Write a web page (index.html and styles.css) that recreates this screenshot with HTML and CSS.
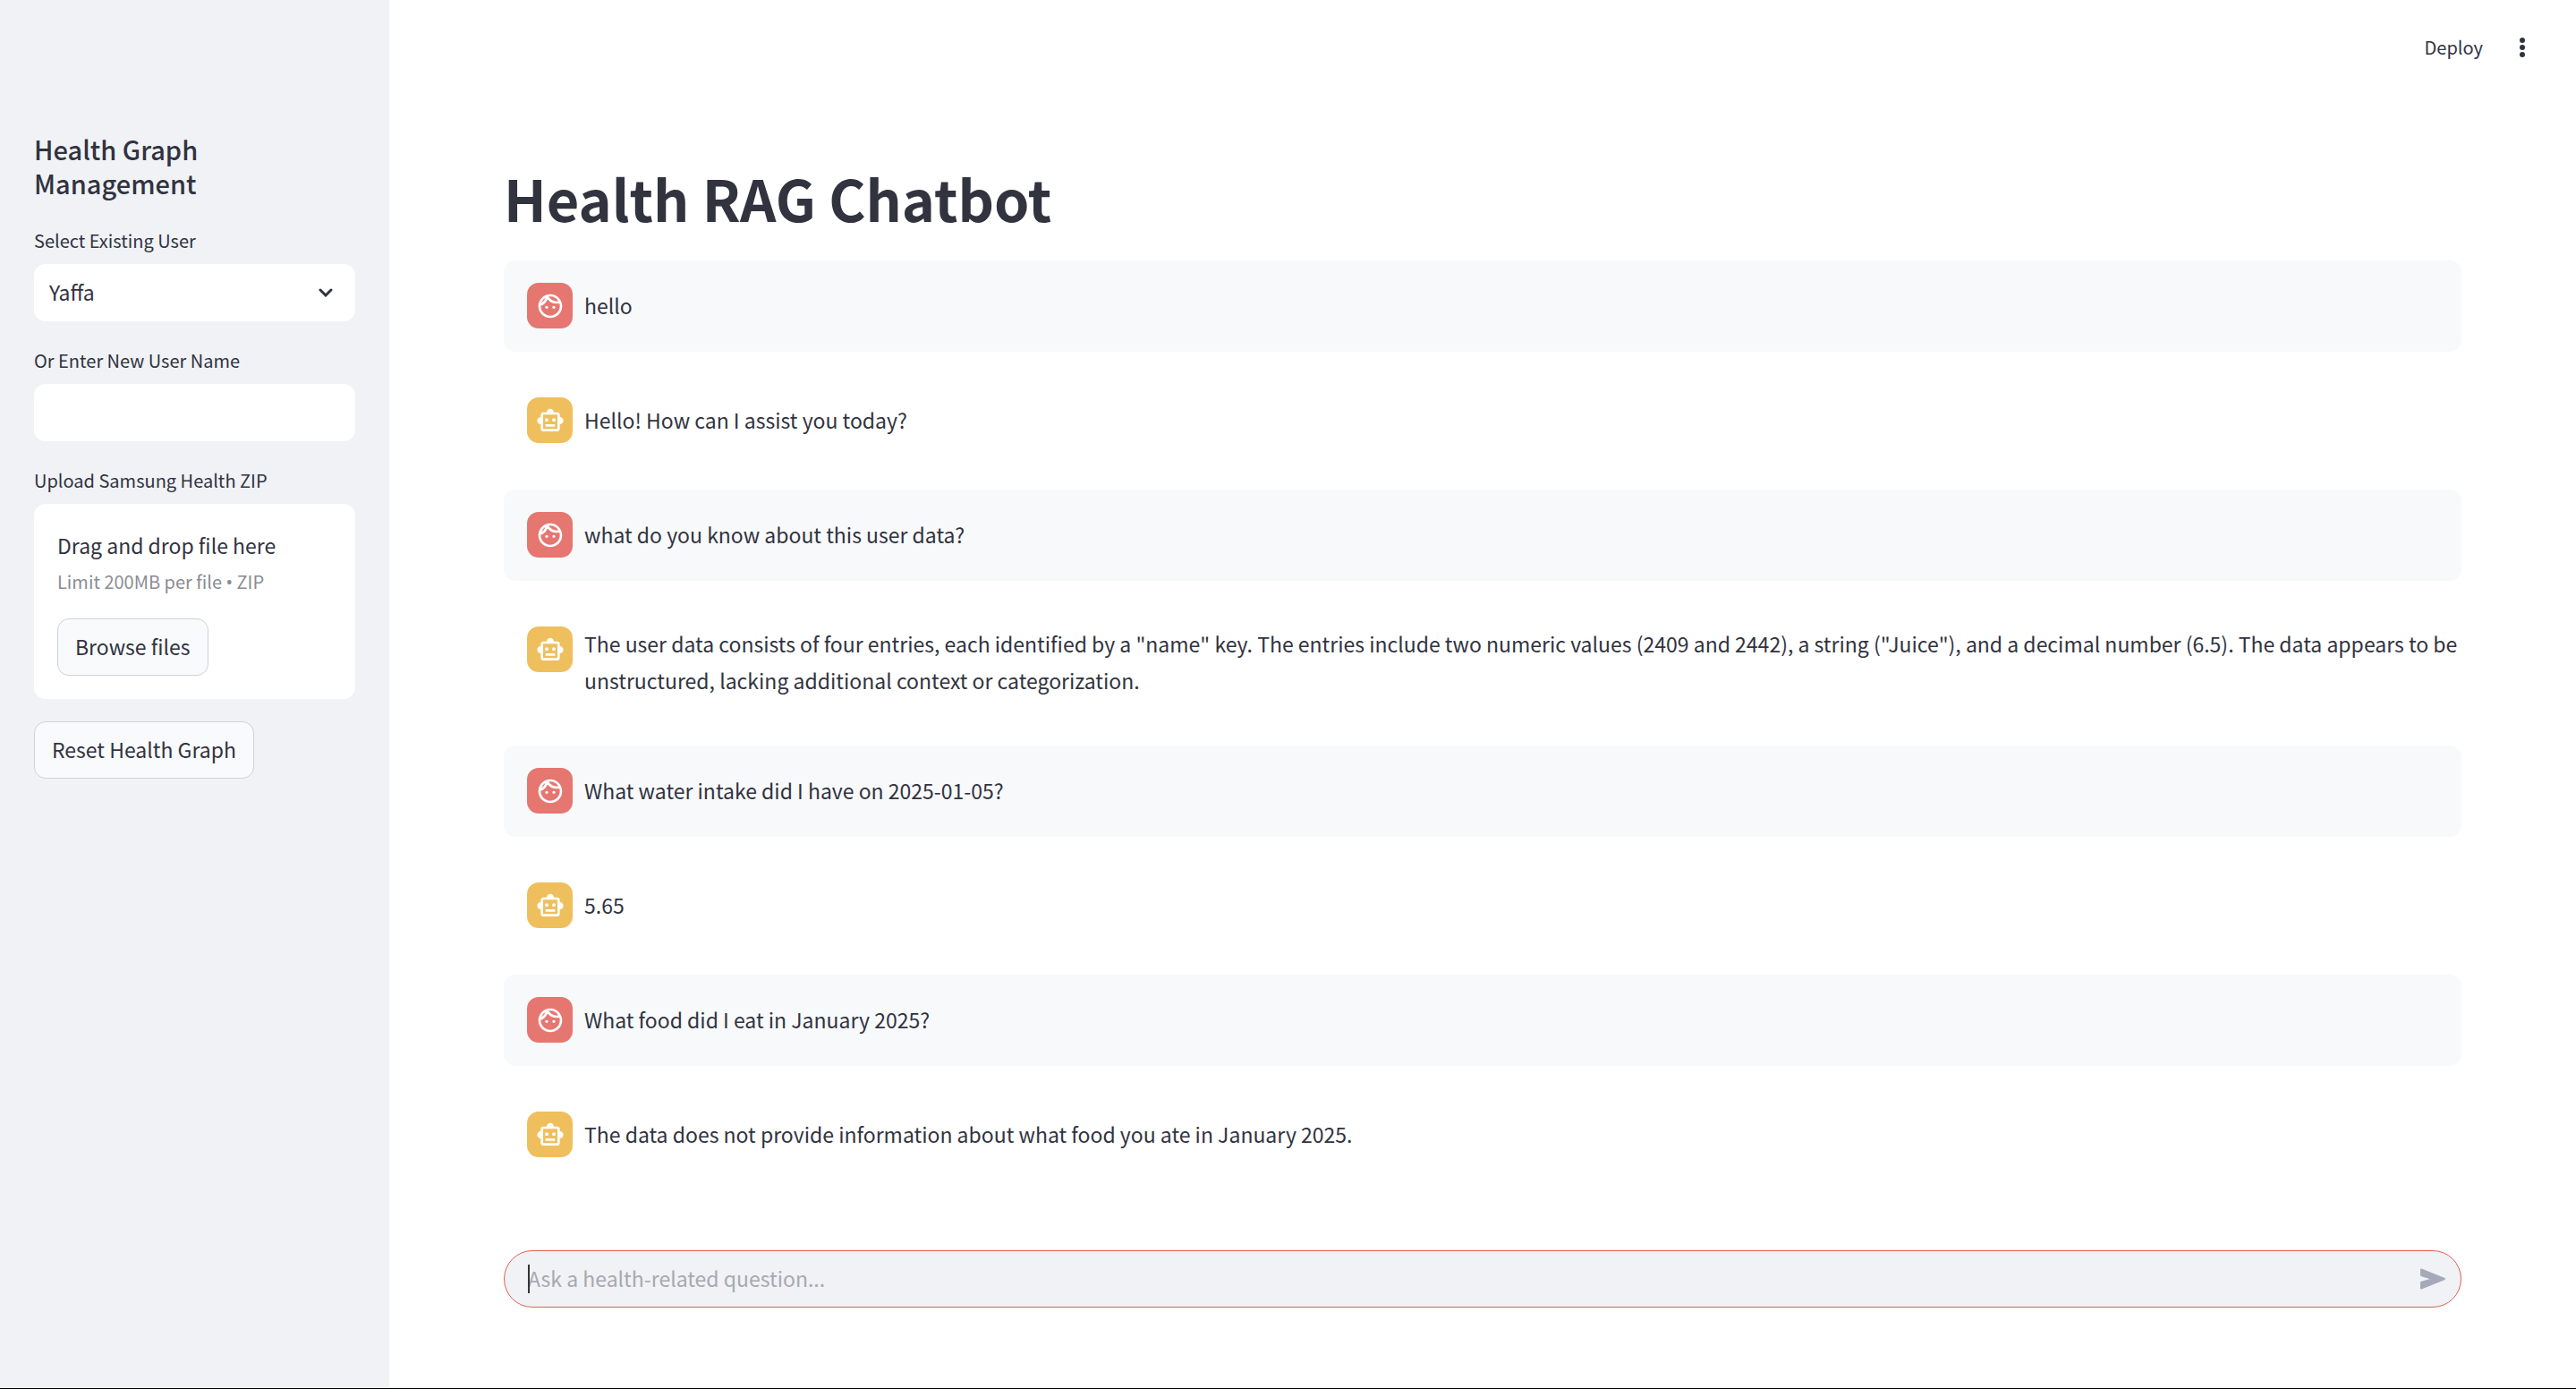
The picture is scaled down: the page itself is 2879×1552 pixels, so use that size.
FILE: index.html
```html
<!DOCTYPE html>
<html lang="en">
<head>
<meta charset="utf-8">
<title>Health RAG Chatbot</title>
<link rel="stylesheet" href="styles.css">
</head>
<body>
<svg class="sprite" aria-hidden="true">
  <symbol id="face" viewBox="0 0 24 24"><path d="M10.25 13c0 .69-.56 1.25-1.25 1.25S7.75 13.69 7.75 13s.56-1.25 1.25-1.25 1.25.56 1.25 1.25zM15 11.75c-.69 0-1.25.56-1.25 1.25s.56 1.25 1.25 1.25 1.25-.56 1.25-1.25-.56-1.25-1.25-1.25zm7 .25c0 5.52-4.48 10-10 10S2 17.52 2 12 6.48 2 12 2s10 4.48 10 10zM10.66 4.12C12.06 6.44 14.6 8 17.5 8c.46 0 .91-.05 1.34-.12C17.44 5.56 14.9 4 12 4c-.46 0-.91.05-1.34.12zM4.42 9.47a8.046 8.046 0 0 0 3.66-4.44 8.046 8.046 0 0 0-3.66 4.44zM20 12c0-.78-.12-1.53-.33-2.24-.7.15-1.42.24-2.17.24a10 10 0 0 1-7.76-3.69A10.016 10.016 0 0 1 4 11.86c.01.04 0 .09 0 .14 0 4.41 3.59 8 8 8s8-3.59 8-8z"/></symbol>
  <symbol id="robot" viewBox="0 0 24 24"><path d="M20 9V7c0-1.1-.9-2-2-2h-3c0-1.66-1.34-3-3-3S9 3.34 9 5H6c-1.1 0-2 .9-2 2v2c-1.66 0-3 1.34-3 3s1.34 3 3 3v4c0 1.1.9 2 2 2h12c1.1 0 2-.9 2-2v-4c1.66 0 3-1.34 3-3s-1.34-3-3-3zm-2 10H6V7h12v12zm-9-6c-.83 0-1.5-.67-1.5-1.5S8.17 10 9 10s1.5.67 1.5 1.5S9.83 13 9 13zm7.5-1.5c0 .83-.67 1.5-1.5 1.5s-1.5-.67-1.5-1.5.67-1.5 1.5-1.5 1.5.67 1.5 1.5zM8 15h8v2H8v-2z"/></symbol>
</svg>
<div class="app">
  <aside class="sidebar">
    <h2 class="sidebar-title">Health Graph Management</h2>
    <div class="field">
      <label class="label" for="user">Select Existing User</label>
      <div class="select-wrap">
        <select class="control" id="user"><option>Yaffa</option></select>
        <svg class="chevron" viewBox="0 0 16 10" aria-hidden="true"><path d="M2 2l6 6 6-6"/></svg>
      </div>
    </div>
    <div class="field">
      <label class="label" for="new-user">Or Enter New User Name</label>
      <input class="control" id="new-user" type="text">
    </div>
    <div class="field upload-field">
      <span class="label" id="upload-label">Upload Samsung Health ZIP</span>
      <section class="dropzone" aria-labelledby="upload-label">
        <p class="drop-title">Drag and drop file here</p>
        <p class="drop-limit">Limit 200MB per file <span class="bullet">•</span> ZIP</p>
        <button class="button" type="button">Browse files</button>
      </section>
    </div>
    <button class="button" type="button">Reset Health Graph</button>
  </aside>
  <div class="page">
    <header class="toolbar">
      <button class="deploy" type="button">Deploy</button>
      <button class="menu" type="button" aria-label="Menu"><svg class="dots" viewBox="0 0 6 22"><circle cx="3" cy="3" r="3"/><circle cx="3" cy="11" r="3"/><circle cx="3" cy="19" r="3"/></svg></button>
    </header>
    <main class="main">
      <h1 class="title">Health RAG Chatbot</h1>
      <div class="messages">
        <article class="message user"><span class="avatar"><svg class="icon"><use href="#face"/></svg></span><p class="text">hello</p></article>
        <article class="message bot"><span class="avatar"><svg class="icon"><use href="#robot"/></svg></span><p class="text">Hello! How can I assist you today?</p></article>
        <article class="message user"><span class="avatar"><svg class="icon"><use href="#face"/></svg></span><p class="text">what do you know about this user data?</p></article>
        <article class="message bot"><span class="avatar"><svg class="icon"><use href="#robot"/></svg></span><p class="text">The user data consists of four entries, each identified by a "name" key. The entries include two numeric values (2409 and 2442), a string ("Juice"), and a decimal number (6.5). The data appears to be unstructured, lacking additional context or categorization.</p></article>
        <article class="message user"><span class="avatar"><svg class="icon"><use href="#face"/></svg></span><p class="text">What water intake did I have on 2025-01-05?</p></article>
        <article class="message bot"><span class="avatar"><svg class="icon"><use href="#robot"/></svg></span><p class="text">5.65</p></article>
        <article class="message user"><span class="avatar"><svg class="icon"><use href="#face"/></svg></span><p class="text">What food did I eat in January 2025?</p></article>
        <article class="message bot"><span class="avatar"><svg class="icon"><use href="#robot"/></svg></span><p class="text">The data does not provide information about what food you ate in January 2025.</p></article>
      </div>
      <form class="composer">
        <input class="question" type="text" placeholder="Ask a health-related question..." aria-label="Ask a health-related question">
        <span class="caret"></span>
        <button class="send" type="button" aria-label="Send"><svg class="send-icon" viewBox="0 0 28 24"><path d="M1 1.5L27 12 1 22.5V16l13-4L1 8z"/></svg></button>
      </form>
    </main>
  </div>
</div>
</body>
</html>
```
FILE: styles.css
```css
* { box-sizing: border-box; }
body {
  margin: 0;
  background: #fff;
  color: #31333f;
  font-family: "Noto Sans CJK SC", "Noto Sans", sans-serif;
  font-size: 23px;
  line-height: 41px;
}
h1, h2, p { margin: 0; }
button, input, select { font: inherit; color: inherit; }
button { cursor: pointer; }
.sprite { display: none; }
.app {
  display: flex;
  min-height: 100vh;
  border-bottom: 1px solid #000;
}

.sidebar {
  flex: none;
  width: 435px;
  padding: 147px 38px 38px;
  background: #f0f2f6;
}
.sidebar-title {
  margin-bottom: 28px;
  font-size: 29px;
  line-height: 38px;
  font-weight: 500;
}
.field { margin-bottom: 26px; }
.upload-field { margin-bottom: 25px; }
.label {
  display: block;
  margin-bottom: 8px;
  font-size: 20px;
  line-height: 36px;
}
.select-wrap { position: relative; }
.control {
  display: block;
  width: 100%;
  height: 64px;
  padding: 0 17px 2px;
  border: 0;
  border-radius: 13px;
  background: #fff;
  appearance: none;
  outline: none;
}
.chevron {
  position: absolute;
  right: 25px;
  top: 27px;
  width: 16px;
  height: 10px;
  fill: none;
  stroke: #31333f;
  stroke-width: 3;
  stroke-linecap: round;
}
.dropzone {
  padding: 26px;
  border-radius: 13px;
  background: #fff;
}
.drop-limit {
  margin-bottom: 20px;
  color: #8b8c93;
  font-size: 20px;
  line-height: 40px;
}
.bullet { font-family: "Noto Sans", sans-serif; }
.button {
  height: 64px;
  padding: 0 19px 2px;
  border: 1px solid #d1d2d5;
  border-radius: 13px;
  background: #f9fafc;
}

.page {
  flex: 1;
  min-width: 0;
  display: flex;
  flex-direction: column;
}
.toolbar {
  display: flex;
  justify-content: flex-end;
  align-items: center;
  gap: 28px;
  height: 106px;
  padding-right: 44px;
}
.deploy, .menu {
  padding: 0;
  border: 0;
  background: none;
}
.deploy {
  padding-bottom: 2px;
  font-size: 20px;
}
.menu {
  display: flex;
  justify-content: center;
  width: 32px;
}
.dots { width: 6px; height: 22px; fill: #31333f; }
.main {
  flex: 1;
  display: flex;
  flex-direction: column;
  padding: 72px 128px 90px;
}
.title {
  margin-bottom: 28px;
  font-size: 63px;
  line-height: 85px;
  font-weight: 700;
}
.messages {
  display: flex;
  flex-direction: column;
  gap: 26px;
  margin-bottom: 52px;
}
.message {
  display: flex;
  gap: 13px;
  min-height: 102px;
  padding: 24px 4px 26px 26px;
  border-radius: 13px;
}
.user { background: #f8f9fb; }
.avatar {
  flex: none;
  display: flex;
  align-items: center;
  justify-content: center;
  width: 51px;
  height: 51px;
  margin-top: 1px;
  border-radius: 13px;
  color: #fff;
}
.user .avatar { background: #e67670; }
.bot .avatar { background: #eebf5c; }
.icon { width: 32px; height: 32px; fill: currentColor; }
.text { align-self: center; }
.composer {
  position: relative;
  display: flex;
  align-items: center;
  height: 64px;
  margin-top: auto;
  padding: 0 17px 0 26px;
  border: 1px solid #e05f57;
  border-radius: 32px;
  background: #f0f2f6;
}
.question {
  flex: 1;
  height: 60px;
  padding: 0 0 2px;
  border: 0;
  background: none;
  outline: none;
}
.question::placeholder { color: #a8a9af; opacity: 1; }
.caret {
  position: absolute;
  left: 26px;
  top: 15px;
  width: 2px;
  height: 32px;
  background: #31333f;
}
.send {
  display: flex;
  padding: 0;
  border: 0;
  background: none;
}
.send-icon {
  width: 28px;
  height: 24px;
  fill: #a5a9b8;
  stroke: #a5a9b8;
  stroke-width: 2;
  stroke-linejoin: round;
}
```
